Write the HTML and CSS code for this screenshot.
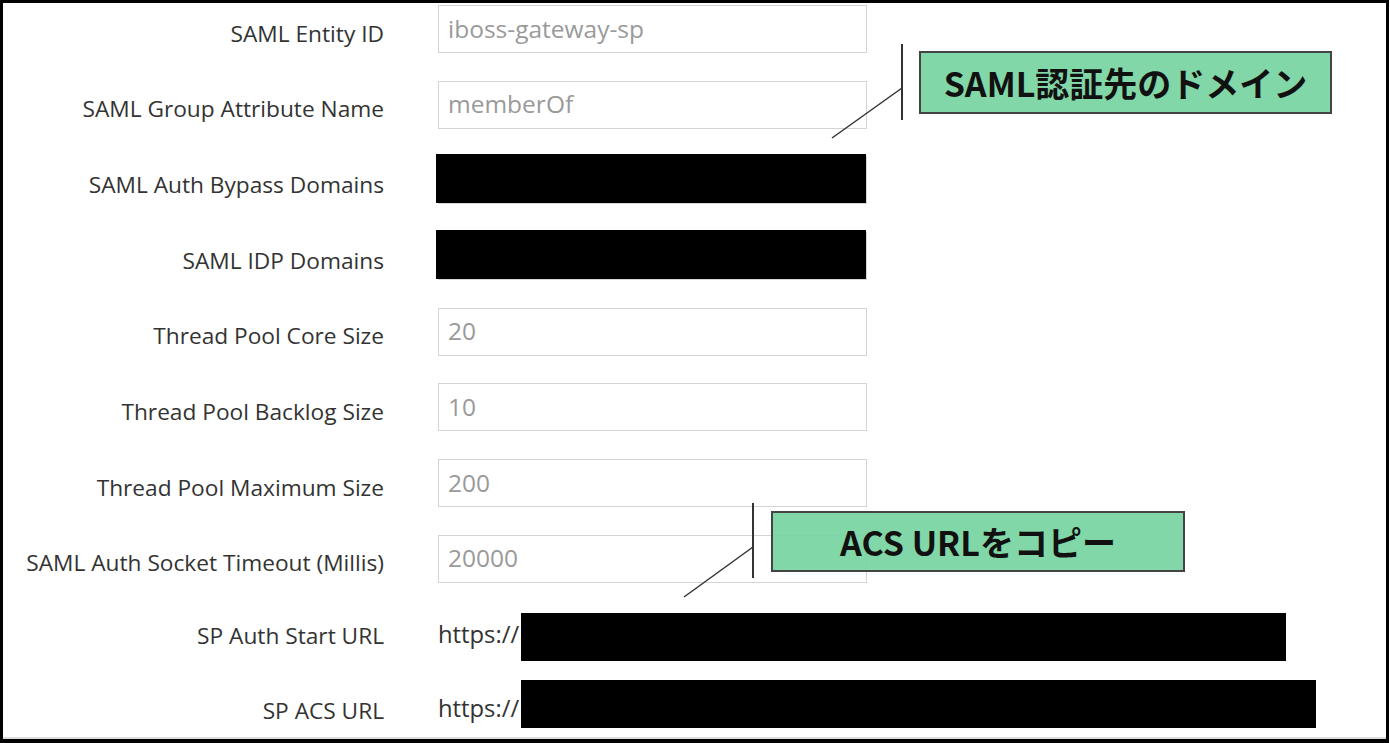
FILE: index.html
```html
<!DOCTYPE html>
<html lang="ja">
<head>
<meta charset="utf-8">
<title>SAML settings</title>
<link rel="stylesheet" href="styles.css">
</head>
<body>
<div class="frame">
  <div class="form">
    <div class="row"><div class="label">SAML Entity ID</div><div class="field">iboss-gateway-sp</div></div>
    <div class="row"><div class="label">SAML Group Attribute Name</div><div class="field">memberOf</div></div>
    <div class="row"><div class="label">SAML Auth Bypass Domains</div><div class="field"><span class="redact-field"></span></div></div>
    <div class="row"><div class="label">SAML IDP Domains</div><div class="field"><span class="redact-field"></span></div></div>
    <div class="row"><div class="label">Thread Pool Core Size</div><div class="field">20</div></div>
    <div class="row"><div class="label">Thread Pool Backlog Size</div><div class="field">10</div></div>
    <div class="row"><div class="label">Thread Pool Maximum Size</div><div class="field">200</div></div>
    <div class="row"><div class="label">SAML Auth Socket Timeout (Millis)</div><div class="field">20000</div></div>
    <div class="row row-url-first"><div class="label">SP Auth Start URL</div><div class="url">https://<span class="redact redact-a"></span></div></div>
    <div class="row"><div class="label">SP ACS URL</div><div class="url">https://<span class="redact redact-b"></span></div></div>
  </div>

  <svg class="leaders" width="1390" height="743" viewBox="0 0 1390 743">
    <line x1="902" y1="44" x2="902" y2="120" stroke="#333" stroke-width="2"/>
    <line x1="832" y1="138" x2="902" y2="88" stroke="#333" stroke-width="1.5"/>
    <line x1="753" y1="503" x2="753" y2="578" stroke="#333" stroke-width="2"/>
    <line x1="684" y1="597" x2="753" y2="547" stroke="#333" stroke-width="1.5"/>
  </svg>

  <div class="callout callout-domain">SAML認証先のドメイン</div>
  <div class="callout callout-acs">ACS URLをコピー</div>
</div>
</body>
</html>
```

FILE: styles.css
```css
* { box-sizing: border-box; }
html, body { margin: 0; padding: 0; background: #fff; }
body { width: 1390px; height: 743px; overflow: hidden; }

.frame {
  position: relative;
  width: 1389px;
  height: 743px;
  border: 3px solid #000;
  border-bottom-width: 4px;
  background: #fff;
  overflow: hidden;
}
.frame::after {
  content: "";
  position: absolute;
  left: 0; right: 0; bottom: 0;
  height: 2px;
  background: #dcdcdc;
}

.form {
  display: flex;
  flex-direction: column;
  gap: 27.7px;
  padding-top: 2px;
}

.row {
  display: grid;
  grid-template-columns: 381px 1fr;
  column-gap: 54px;
  height: 48px;
  align-items: center;
}
.row-url-first { margin-top: -4px; }

.label {
  font-family: "Open Sans", "Liberation Sans", sans-serif;
  font-size: 22.7px;
  color: #333;
  text-align: right;
  padding-top: 8px;
  white-space: nowrap;
}

.field {
  position: relative;
  width: 429px;
  height: 48px;
  border: 1px solid #d4d4d4;
  padding-left: 9px;
  display: flex;
  align-items: center;
  font-family: "Open Sans", "Liberation Sans", sans-serif;
  font-size: 24.5px;
  color: #9a9a9a;
  padding-bottom: 2px;
}

.redact-field {
  position: absolute;
  left: -3px;
  top: -3px;
  width: 430px;
  height: 49px;
  background: #000;
}

.url {
  display: flex;
  align-items: center;
  font-family: "Open Sans", "Liberation Sans", sans-serif;
  font-size: 23.8px;
  color: #333;
  padding-top: 4px;
  white-space: nowrap;
}

.redact {
  display: inline-block;
  background: #000;
  height: 48px;
  margin-left: 2px;
  transform: translateY(4px);
}
.redact-a { width: 765px; margin-top: -2px; }
.redact-b { width: 795px; margin-top: -16px; }

.leaders {
  position: absolute;
  left: -3px;
  top: -3px;
  pointer-events: none;
}

.callout {
  position: absolute;
  border: 2px solid #444;
  background: rgba(118, 212, 160, 0.92);
  font-family: "Noto Sans CJK JP", "Noto Sans", sans-serif;
  font-weight: 700;
  color: #111;
  display: flex;
  align-items: center;
  justify-content: center;
  white-space: nowrap;
}
.callout-domain {
  left: 916px;
  top: 48px;
  width: 413px;
  height: 63px;
  font-size: 34px;
}
.callout-acs {
  left: 768px;
  top: 508px;
  width: 414px;
  height: 61px;
  font-size: 34px;
}
```
